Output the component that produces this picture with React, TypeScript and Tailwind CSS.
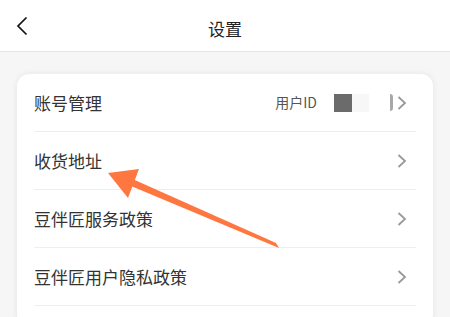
const ROWS = ['收货地址', '豆伴匠服务政策', '豆伴匠用户隐私政策']

const font = { fontFamily: '"Noto Sans CJK SC", "Noto Sans", sans-serif' }

function Chevron() {
  return (
    <svg width="10" height="14" viewBox="0 0 10 14" className="mr-[9px]">
      <polyline points="1.5,1 8,7 1.5,13" fill="none" stroke="#999" strokeWidth="1.8" />
    </svg>
  )
}

function Arrow() {
  // orange pointer drawn over the list
  return (
    <svg className="absolute left-0 top-0 pointer-events-none" width="450" height="317" viewBox="0 0 450 317">
      <polygon points="108,173 139,169 128,198" fill="#ff7740" />
      <polygon points="128,177 276,243 279,248 131,186" fill="#ff7740" />
    </svg>
  )
}

export default function App() {
  return (
    <div className="relative w-[450px] h-[317px] overflow-hidden bg-[#f6f6f6]" style={font}>
      {/* ── Header ── */}
      <div className="h-[52px] bg-white border-b border-[#e6e6e6] flex items-center relative">
        <svg width="12" height="20" viewBox="0 0 12 20" className="ml-[16px]">
          <polyline points="10.5,1.5 2,10 10.5,18.5" fill="none" stroke="#111" strokeWidth="1.7" />
        </svg>
        <span className="absolute left-0 right-0 top-[20px] text-center text-[17px] text-[#222] leading-none">设置</span>
      </div>

      {/* ── Card ── */}
      <div className="mx-[17px] mt-[22px] bg-white rounded-[12px] shadow-[0_0_6px_rgba(0,0,0,0.08)] px-[17px] pb-[20px]">
        <div className="h-[58px] flex items-center border-b border-[#eeeeee]">
          <span className="flex-1 text-[17px] text-[#333]">账号管理</span>
          <span className="text-[14px] text-[#555] mr-[17px]">用户ID</span>
          <div className="w-[18px] h-[18px] bg-[#6b6b6b]" />
          <div className="w-[17px] h-[18px] bg-[#f7f7f7]" />
          <div className="ml-[21px] mr-[4px] w-[3px] h-[17px] bg-[#a8a8a8] rounded-r-full" />
          <Chevron />
        </div>
        {ROWS.map(label => (
          <div key={label} className="h-[58px] flex items-center border-b border-[#eeeeee]">
            <span className="flex-1 text-[17px] text-[#333]">{label}</span>
            <Chevron />
          </div>
        ))}
      </div>

      <Arrow />
    </div>
  )
}
